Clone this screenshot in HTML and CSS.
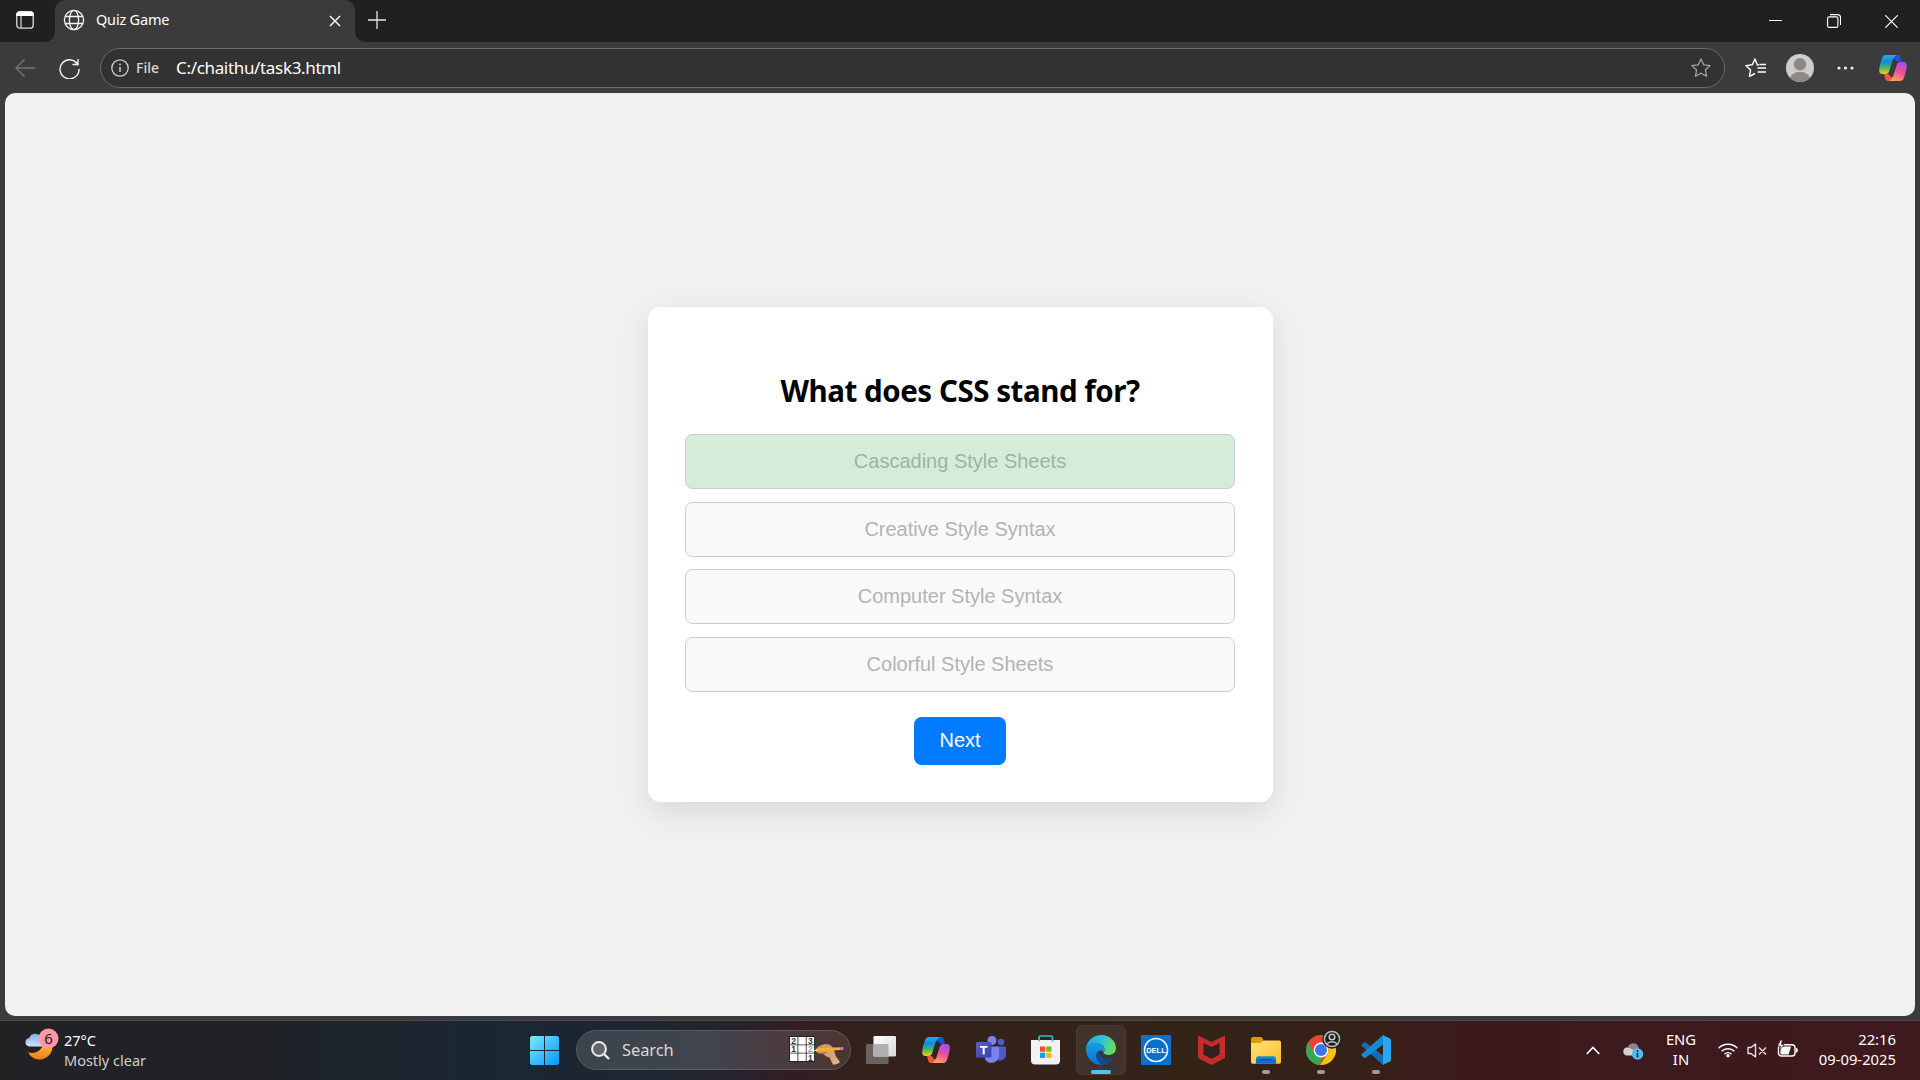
FILE: index.html
```html
<!DOCTYPE html>
<html lang="en">
<head>
<meta charset="utf-8">
<title>Quiz Game</title>
<link rel="stylesheet" href="styles.css">
</head>
<body>
<svg class="defs" width="0" height="0" aria-hidden="true">
  <defs>
    <linearGradient id="cpA" x1="0" y1="0" x2="0" y2="1"><stop offset="0" stop-color="#19b0f4"/><stop offset=".35" stop-color="#1687dd"/><stop offset=".68" stop-color="#4fb85c"/><stop offset="1" stop-color="#f8ce12"/></linearGradient>
    <linearGradient id="cpB" x1=".7" y1="0" x2=".3" y2="1"><stop offset="0" stop-color="#a64cf0"/><stop offset=".5" stop-color="#ee529a"/><stop offset="1" stop-color="#ffa65c"/></linearGradient>
    <linearGradient id="cpC" x1="0" y1="0" x2="1" y2="1"><stop offset="0" stop-color="#1268e5"/><stop offset="1" stop-color="#1747bd"/></linearGradient>
    <symbol id="copilot" viewBox="0 0 28 26">
      <path d="M14 0h5c2 0 2.600 1.500 3.200 3.600L23 7.200h-3c-2 0-2.500-1-3-2.200-.4-1-1.500-1.300-3.300-.3z" fill="url(#cpC)"/>
      <path d="M14 26H9c-2 0-2.600-1.500-3.200-3.600L5 18.800h3c2 0 2.500 1 3 2.200.4 1 1.500 1.300 3.300.3z" fill="#f4573b"/>
      <path d="M7 0h11.500c-2.500.3-4 2.500-4.800 5L10.600 15c-.8 2.700-1.600 4-4.600 4H3.500C.5 19-.2 16.500.3 13.500 1 9 2.200 5.500 3 3.200 3.800 1 5 0 7 0z" fill="url(#cpA)"/>
      <path d="M21 26H9.500c2.500-.3 4-2.500 4.800-5L17.400 11c.8-2.700 1.600-4 4.600-4h2.500c3 0 3.700 2.500 3.200 5.500-.7 4.500-1.900 8-2.700 10.300-.8 2.200-2 3.200-4 3.200z" fill="url(#cpB)"/>
    </symbol>
    <linearGradient id="moon" x1="0" y1="0" x2="0" y2="1"><stop offset="0" stop-color="#ffc63c"/><stop offset="1" stop-color="#f47a1b"/></linearGradient>
    <linearGradient id="cloud" x1="0" y1="0" x2="0" y2="1"><stop offset="0" stop-color="#7faaf0"/><stop offset="1" stop-color="#d3e3fc"/></linearGradient>
    <linearGradient id="win" gradientUnits="userSpaceOnUse" x1="0" y1="0" x2="29" y2="29"><stop offset="0" stop-color="#7ae9ff"/><stop offset="1" stop-color="#0b93fb"/></linearGradient>
    <linearGradient id="tvA" x1="0" y1="0" x2="1" y2="1"><stop offset="0" stop-color="#fff"/><stop offset="1" stop-color="#d8d8d8"/></linearGradient>
    <linearGradient id="teams" x1="0" y1="0" x2="1" y2="1"><stop offset="0" stop-color="#5a62c3"/><stop offset="1" stop-color="#3740ab"/></linearGradient>
    <linearGradient id="edgeA" x1="0" y1=".3" x2="1" y2=".6"><stop offset="0" stop-color="#24a5e0"/><stop offset=".5" stop-color="#30c6cf"/><stop offset="1" stop-color="#6be052"/></linearGradient>
    <linearGradient id="edgeB" x1="0" y1="0" x2="0" y2="1"><stop offset="0" stop-color="#1b9de2"/><stop offset="1" stop-color="#0a70d5"/></linearGradient>
    <linearGradient id="folder" x1="0" y1="0" x2="1" y2="1"><stop offset="0" stop-color="#ffe17b"/><stop offset="1" stop-color="#fcc024"/></linearGradient>
    <linearGradient id="drawer" x1="0" y1="0" x2="0" y2="1"><stop offset="0" stop-color="#1a8de0"/><stop offset="1" stop-color="#0966c4"/></linearGradient>
    <linearGradient id="hand" x1="0" y1="0" x2="1" y2="1"><stop offset="0" stop-color="#c98a60"/><stop offset="1" stop-color="#e3b48f"/></linearGradient>
  </defs>
</svg>

<div class="browser">
  <div class="titlebar">
    <div class="tab-actions">
      <svg width="18" height="18" viewBox="0 0 18 18"><rect x=".8" y="1" width="16.400" height="16.200" rx="3" fill="none" stroke="#ddd" stroke-width="1.300"/><path d="M.2 5V3.500C.2 1.500 1.500.3 3.500.3h11c2 0 3.300 1.200 3.300 3.200V5z" fill="#fff"/><path d="M5 5v12" stroke="#ddd" stroke-width="1.200"/></svg>
    </div>
    <div class="tab">
      <svg width="22" height="22" viewBox="0 0 22 22" fill="none" stroke="#f3f3f3" stroke-width="1.300"><circle cx="11" cy="11" r="9.600"/><ellipse cx="11" cy="11" rx="4.600" ry="9.600"/><path d="M2.300 7.500h17.400M2.300 14.500h17.400"/></svg>
      <span class="tab-title">Quiz Game</span>
      <svg class="tab-close" width="12" height="12" viewBox="0 0 12 12" stroke="#f3f3f3" stroke-width="1.500"><path d="M1 1l10 10M11 1L1 11"/></svg>
    </div>
    <svg class="new-tab" width="18" height="18" viewBox="0 0 18 18" stroke="#e6e6e6" stroke-width="1.300"><path d="M9 0v18M0 9h18"/></svg>
    <div class="window-controls">
      <svg width="13" height="13" viewBox="0 0 13 13" stroke="#fff"><path d="M0 5.500h13"/></svg>
      <svg width="14" height="14" viewBox="0 0 14 14" fill="none" stroke="#fff" stroke-width="1.100"><rect x=".6" y="2.900" width="10.300" height="10.500" rx="1.500"/><path d="M3 .6h7.500c1.800 0 3 1 3 3V11"/></svg>
      <svg width="13" height="13" viewBox="0 0 13 13" stroke="#fff" stroke-width="1.200"><path d="M.3.3l12.400 12.400M12.700.3L.3 12.700"/></svg>
    </div>
  </div>

  <div class="toolbar">
    <svg class="back" width="20" height="18" viewBox="0 0 20 18" fill="none" stroke="#777" stroke-width="1.300"><path d="M20 9H1M9.500.5L1 9l8.500 8.500"/></svg>
    <svg class="reload" width="21" height="21" viewBox="0 0 21 21" fill="none" stroke="#f3f3f3" stroke-width="1.400"><path d="M19.200 7.500A9.500 9.500 0 1 0 20 11M19 1v5.500h-5.500"/></svg>
    <div class="address">
      <svg width="18" height="18" viewBox="0 0 18 18" fill="none" stroke="#d0d0d0" stroke-width="1.300"><circle cx="9" cy="9" r="8.200"/><path d="M9 8v5" stroke-width="1.500"/><circle cx="9" cy="5.400" r=".9" fill="#d0d0d0" stroke="none"/></svg>
      <span class="scheme">File</span>
      <span class="url">C:/chaithu/task3.html</span>
      <svg class="star" width="20" height="20" viewBox="0 0 20 20" fill="none" stroke="#a5a5a5" stroke-width="1.300" stroke-linejoin="round"><path d="M10 1l2.700 5.800 6.400.8-4.700 4.400 1.200 6.300L10 15.200l-5.600 3.100L5.600 12 .9 7.600l6.400-.8z"/></svg>
    </div>
    <div class="tools">
      <svg width="21" height="20" viewBox="0 0 21 20" fill="none" stroke="#fff" stroke-width="1.400" stroke-linejoin="round"><path d="M14 7l-1.700-.3L10 1 7.300 6.800l-6.400.8 4.700 4.400-1.200 6.300L10 15.500M12.500 10H21M12.500 14H21M14.500 6.500H21"/></svg>
      <svg class="avatar" width="28" height="28" viewBox="0 0 28 28"><clipPath id="av"><circle cx="14" cy="14" r="14"/></clipPath><g clip-path="url(#av)"><path fill="#cfcdcb" d="M0 0h28v28H0z"/><circle cx="14" cy="10.300" r="6.200" fill="#8c8885"/><ellipse cx="14" cy="26" rx="10.500" ry="8.300" fill="#8c8885"/></g></svg>
      <svg class="more" width="17" height="4" viewBox="0 0 17 4" fill="#f0f0f0"><circle cx="2" cy="2" r="1.600"/><circle cx="8.500" cy="2" r="1.600"/><circle cx="15" cy="2" r="1.600"/></svg>
      <svg class="assistant" width="28" height="26"><use href="#copilot"/></svg>
    </div>
  </div>

  <main class="page">
    <section class="quiz">
      <h2 class="question">What does CSS stand for?</h2>
      <div class="options">
        <button class="option correct" disabled>Cascading Style Sheets</button>
        <button class="option" disabled>Creative Style Syntax</button>
        <button class="option" disabled>Computer Style Syntax</button>
        <button class="option" disabled>Colorful Style Sheets</button>
      </div>
      <button class="next">Next</button>
    </section>
  </main>
</div>

<footer class="taskbar">
  <div class="weather">
    <svg width="36" height="36" viewBox="0 0 36 36"><path d="M27.500 17.500A13 13 0 0 1 3 24.500c9 2 15-3 15.500-11z" fill="url(#moon)"/><path d="M4 18.500a4.300 4.300 0 0 1 .3-8.500 6 6 0 0 1 11-1l4 9.500z" fill="url(#cloud)"/><circle cx="23.500" cy="10.500" r="10" fill="#ff99a4"/><text x="23.500" y="16" class="badge">6</text></svg>
    <div class="weather-text"><span class="temp">27°C</span><span class="sky">Mostly clear</span></div>
  </div>

  <div class="apps">
    <div class="app">
      <svg width="29" height="29" viewBox="0 0 29 29" fill="url(#win)"><path d="M1.500 0H14v14H0V1.500zM15 0h12.500L29 1.500V14H15zM0 15h14v14H1.500L0 27.500zM15 15h14v12.500L27.500 29H15z"/></svg>
    </div>
    <div class="search">
      <svg width="19" height="19" viewBox="0 0 19 19" fill="none" stroke="#ececec" stroke-width="2"><circle cx="8" cy="8" r="6.900" fill="#62666c"/><path d="M13 13l5 5" stroke-width="2.400"/></svg>
      <span class="search-label">Search</span>
      <svg class="sudoku" width="57" height="30" viewBox="0 0 57 30">
        <path d="M1 1h26v26H1z" fill="#222"/>
        <path d="M2 2h7.500v7.500H2zM10.300 2h7.500v7.500h-7.500zM18.600 2h7.500v7.500h-7.500zM2 10.300h7.500v7.500H2zM10.300 10.300h7.500v7.500h-7.500zM18.600 10.300h7.500v7.500h-7.500zM2 18.600h7.500v7.500H2zM10.300 18.600h7.500v7.500h-7.500zM18.600 18.600h7.500v7.500h-7.500z" fill="#fff"/>
        <g class="digits"><text x="5.700" y="8.800">2</text><text x="22.300" y="8.800">3</text><text x="5.700" y="17.200">1</text><text x="22.300" y="17.200" fill="#999">2</text><text x="22.300" y="25.500">1</text></g>
        <path d="M28 14c1.500-2.500 5-4.500 9-5 3.500-.3 7 1.500 8.700 5 1.300 3 1.300 5.500 2.300 7.500l4 5.500c-2 1.800-4 2.600-7 2.800l-3.500-7.300c-2.500-.3-4.500-2-6-3.500-3-.3-6.500-.7-7.500-2.500z" fill="url(#hand)"/>
        <path d="M33 18.500c2 0 3.500-.5 5-1.500" fill="none" stroke="#9c6540"/>
        <path d="M25.500 15.700l6-2.700 21-.8v2.700l-21 1.400z" fill="#f3b22c"/><path d="M52.500 12.200l2.800-.2v2.700l-2.800.2z" fill="#ee7593"/><path d="M25.500 15.700l3.500-1.600.5 2z" fill="#f7dca8"/>
      </svg>
    </div>
    <div class="app">
      <svg width="30" height="28" viewBox="0 0 30 28"><rect y="8" width="22.500" height="20" rx="1.200" fill="#666361"/><rect x="7.500" width="22.500" height="20.500" rx="1.200" fill="url(#tvA)"/><path d="M7.500 8h15v12.500h-14a1 1 0 0 1-1-1z" fill="#b2b0ae"/></svg>
    </div>
    <div class="app">
      <svg width="28" height="26"><use href="#copilot"/></svg>
    </div>
    <div class="app">
      <svg width="30" height="28" viewBox="0 0 30 28"><circle cx="25" cy="6" r="3.300" fill="#5059c9"/><path d="M20 10.500h8.500c1 0 1.500.6 1.500 1.500v6a6 6 0 0 1-10 5z" fill="#5059c9"/><circle cx="16" cy="4.500" r="4.500" fill="#7b83eb"/><path d="M9 10.500h12.500c1 0 1.500.6 1.500 1.500v8a7.500 7.500 0 0 1-14 3z" fill="#7b83eb"/><rect y="6" width="15.500" height="15.500" rx="1.500" fill="url(#teams)"/><path d="M4 10h7.500v1.800H8.700v6.700h-2v-6.700H4z" fill="#fff"/></svg>
    </div>
    <div class="app store">
      <svg width="29" height="30" viewBox="0 0 29 30"><path d="M8 6V2.500c0-1 .7-1.500 1.500-1.500h10.500c.8 0 1.500.5 1.500 1.500V6" fill="none" stroke="#35b8e8" stroke-width="1.700"/><path d="M0 5h29v20.500c0 2.500-1.500 4-4 4H4c-2.500 0-4-1.500-4-4z" fill="#f2f2f2"/><path d="M9 11.500h5.200v5.200H9z" fill="#f25022"/><path d="M15.200 11.500h5.200v5.200h-5.200z" fill="#7fba00"/><path d="M9 17.700h5.200v5.200H9z" fill="#00a4ef"/><path d="M15.200 17.700h5.200v5.200h-5.200z" fill="#ffb900"/><path d="M7.200 5h1.600v1.500H7.200zM20.700 5h1.600v1.500h-1.600z" fill="#35b8e8"/></svg>
    </div>
    <div class="app active">
      <svg width="30" height="30" viewBox="0 0 30 30"><path d="M0 14C1 5 7.500 0 15 0c8.500 0 15 6 15 13 0 4.500-3.500 7-7.500 7-3 0-5-1-5-2.200 0-.8 1-1.400 1-3.300C18.500 11 15 8 10 8 5 8 1.500 11 0 14z" fill="url(#edgeA)"/><path d="M0 14c1-4 4.500-6.500 9-6.500 5.500 0 9.500 3.500 9.500 7 0 1.900-1 2.500-1 3.300-.8-2.300-3-3-4.500-1.500-2.500 2.500-2 10 4.500 13.400C8 31 0 24 0 14z" fill="url(#edgeB)"/><path d="M13.500 15.200C8.500 18 8 26.500 17.500 29.800c5-.8 8.500-3.300 10.600-7.200-6.600 3.400-15.100.4-14.600-7.400z" fill="#114b8d"/></svg>
    </div>
    <div class="app">
      <svg width="30" height="30" viewBox="0 0 30 30"><path d="M0 0h30v30H0z" fill="#0672ce"/><circle cx="15" cy="15" r="11.500" fill="none" stroke="#fff" stroke-width="1.500"/><text x="15" y="17.800" class="dell">DELL</text></svg>
    </div>
    <div class="app">
      <svg width="27" height="30" viewBox="0 0 27 30"><path d="M0 .5l13.500 6.500L27 .5V23l-13.500 7L0 23z" fill="#c52d2d"/><path d="M5.500 8l8 4 8-4v11.800l-8 4-8-4z" fill="#33221c"/></svg>
    </div>
    <div class="app running">
      <svg width="30" height="27" viewBox="0 0 30 27"><path d="M0 2c0-1.200.8-2 2-2h7c1.500 0 2 .5 3 1.800h0V8H0z" fill="#dc9c08"/><path d="M0 6h9.500l3-2.500H28c1.200 0 2 .8 2 2V25c0 1-.8 1.800-2 1.800H2C.8 26.800 0 26 0 25z" fill="url(#folder)"/><path d="M5 26.800v-5c0-1.500 1-2.600 2.600-2.600h14.800c1.600 0 2.600 1.100 2.600 2.600v5z" fill="url(#drawer)"/><path d="M8.500 22.800h13" stroke="#0b4e96" stroke-width="1.200"/></svg>
    </div>
    <div class="app running">
      <svg width="40" height="40" viewBox="0 0 40 40"><circle cx="20" cy="20" r="15" fill="#ea4335"/><path d="M7 12.500L13.500 23.800A7.500 7.500 0 0 0 20 27.500l-3.500 7.200A15 15 0 0 1 7 12.500z" fill="#34a853"/><path d="M20 35l-.8-.1 7.300-11.100a7.500 7.500 0 0 0 0-7.500L33 12.500A15 15 0 0 1 20 35z" fill="#fbc116"/><path d="M13 23l7 4.500 2.500-.5-4.200 8-3.300-.8z" fill="#34a853"/><circle cx="20" cy="20" r="7.400" fill="#fff"/><circle cx="20" cy="20" r="6" fill="#3b78e7"/><circle cx="31" cy="9" r="9.700" fill="#201f1f"/><circle cx="31" cy="9" r="7.600" fill="none" stroke="#b9b9b9" stroke-width="1.500"/><circle cx="31" cy="7" r="2.800" fill="none" stroke="#c4c4c4" stroke-width="1.500"/><path d="M25.700 14c2.500-3 8-3 10.600 0" fill="none" stroke="#c4c4c4" stroke-width="1.700"/></svg>
    </div>
    <div class="app running">
      <svg width="30" height="30" viewBox="0 0 30 30"><path d="M1 9l2-1.800c.5-.4 1-.4 1.600 0L24 22l-2 8L.6 10.700C0 10.200.2 9.700 1 9z" fill="#0a6fb5"/><path d="M1 21l2 1.800c.5.4 1 .4 1.600 0L24 8l-2-8L.6 19.300c-.6.5-.4 1 .4 1.700z" fill="#168bd0"/><path d="M21.500 0L28.500 3.200c1 .5 1.500 1.100 1.500 2.300v19c0 1.200-.5 1.800-1.500 2.300L21.500 30c.4-.5.500-1 .5-2V2c0-1-.1-1.500-.5-2z" fill="#2aa7f0"/></svg>
    </div>
  </div>

  <div class="tray">
    <svg class="chevron" width="14" height="9" viewBox="0 0 14 9" fill="none" stroke="#fff" stroke-width="1.600"><path d="M.7 8L7 1.500 13.300 8"/></svg>
    <svg class="onedrive" width="21" height="18" viewBox="0 0 21 18"><path d="M5 5a5.500 5.500 0 0 1 10.300-.5L17 10H7z" fill="#8e8484"/><path d="M3.500 13.500A4 4 0 0 1 4 5.600c1.500-.3 3 .2 4.500 1.400L13 9.500l-3 4z" fill="#d7d2d2"/><circle cx="14.500" cy="12" r="5.700" fill="#55bdf5"/><path d="M14.500 11v4.500M14.500 8.300v1.700" stroke="#14242f" stroke-width="1.600"/></svg>
    <div class="lang"><span>ENG</span><span>IN</span></div>
    <svg class="wifi" width="20" height="16" viewBox="0 0 20 16" fill="none" stroke="#fff" stroke-width="1.500"><path d="M.6 6.300a13.200 13.200 0 0 1 18.800 0M3.600 9.300a9 9 0 0 1 12.800 0M6.500 12.200a5 5 0 0 1 7 0"/><circle cx="10" cy="13.800" r="1.700" fill="#fff" stroke="none"/></svg>
    <svg class="volume" width="20" height="15" viewBox="0 0 20 15" fill="none" stroke="#e8e0e0" stroke-width="1.400" stroke-linejoin="round"><path d="M1 4.500h3L8.500 1v13L4 10.500H1zM12 4.500l7 7M19 4.500l-7 7"/></svg>
    <svg class="battery" width="21" height="17" viewBox="0 0 21 17"><rect x="1.500" y="4.700" width="16.500" height="11.300" rx="3" fill="none" stroke="#fff" stroke-width="1.400"/><path d="M3.500 7L8 6.500h6L11.500 14.500H4.500c-.7 0-1-.5-1-1z" fill="#fff"/><path d="M18.800 8c1.300 0 2 .7 2 2.300s-.7 2.400-2 2.400z" fill="#fff"/><path d="M3.500 0L.5 6h3L2.500 10.500 7 4.500H4.300L5.500 0z" fill="#fff" stroke="#3e191e" stroke-width=".7"/></svg>
    <div class="clock"><span>22:16</span><span>09-09-2025</span></div>
  </div>
</footer>
</body>
</html>
```
FILE: styles.css
```css
* { box-sizing: border-box; }

body {
  margin: 0;
  width: 1920px;
  height: 1080px;
  overflow: hidden;
  display: flex;
  flex-direction: column;
  font-family: "Noto Sans", "Open Sans", sans-serif;
  color: #fff;
}

svg { display: block; flex: none; }
.defs { position: absolute; }

/* Browser window */
.browser {
  height: 1021px;
  display: flex;
  flex-direction: column;
  background: #3b3b3b;
  border-bottom: 1px solid #4a4a4a;
}

.titlebar {
  height: 42px;
  flex: none;
  display: flex;
  align-items: center;
  background: linear-gradient(#202020 0 20px, #3b3b3b 20px);
}

.tab-actions {
  width: 55px;
  height: 42px;
  padding: 11px 0 0 16px;
  background: #202020;
  border-bottom-right-radius: 10px;
}

.tab {
  width: 300px;
  height: 42px;
  display: flex;
  align-items: center;
  padding: 0 14px 3px 8px;
  background: #3b3b3b;
  border-radius: 10px 10px 0 0;
}

.tab-title {
  margin: 0 0 1px 11px;
  font-size: 14.5px;
  letter-spacing: -0.2px;
}

.tab-close { margin: 2px 0 0 auto; }

.new-tab {
  box-sizing: content-box;
  height: 18px;
  padding: 11px 0 13px 13px;
  background: #202020;
  border-bottom-left-radius: 10px;
}

.window-controls {
  flex: 1;
  height: 42px;
  display: flex;
  justify-content: flex-end;
  align-items: center;
  gap: 44.5px;
  padding-right: 22px;
  background: #202020;
}

.toolbar {
  height: 51px;
  flex: none;
  display: flex;
  align-items: center;
  padding: 1px 13px 0 15px;
}

.reload { margin-left: 24px; }

.address {
  width: 1625px;
  height: 40px;
  margin-left: 20px;
  display: flex;
  align-items: center;
  padding: 0 13px 0 10px;
  background: #323232;
  border: 1px solid #6b6b6b;
  border-radius: 20px;
}

.scheme {
  width: 40px;
  margin: 0 0 1px 7px;
  font-size: 14px;
  font-weight: 500;
  color: #d8d8d8;
}

.url {
  margin-bottom: 1px;
  font-size: 17px;
  letter-spacing: -0.33px;
}

.star { margin-left: auto; }

.tools {
  flex: 1;
  display: flex;
  align-items: center;
  margin-left: 19.5px;
}

.avatar { margin-left: 20px; }
.more { margin-left: 23px; }
.assistant { margin-left: auto; }

.page {
  height: 923px;
  flex: none;
  margin: 0 5px;
  display: flex;
  align-items: center;
  justify-content: center;
  background: #f1f1f1;
  border-radius: 10px;
}

/* Quiz card */
.quiz {
  width: 625px;
  height: 495px;
  display: flex;
  flex-direction: column;
  align-items: center;
  padding: 63px 37.5px 37.5px;
  background: #fff;
  border-radius: 12.5px;
  box-shadow: 0 10px 31px rgba(0, 0, 0, 0.1);
}

.question {
  margin: 0 0 23px;
  height: 41px;
  font-size: 29.5px;
  line-height: 41px;
  font-weight: 700;
  letter-spacing: -0.45px;
  color: #000;
  white-space: nowrap;
}

.options {
  width: 100%;
  display: flex;
  flex-direction: column;
  gap: 12.5px;
}

.option {
  height: 55px;
  padding: 0;
  background: #f9f9f9;
  border: 1px solid #ccc;
  border-radius: 7.5px;
  font: 20px "Liberation Sans", Arial, sans-serif;
  color: #b3b3b3;
}

.option.correct {
  background: #d4edda;
  color: #9eb3a4;
}

.next {
  width: 92px;
  height: 48px;
  margin-top: 25px;
  padding: 0;
  background: #007bff;
  border: 0;
  border-radius: 7.5px;
  font: 20px "Liberation Sans", Arial, sans-serif;
  color: #fff;
}

/* Taskbar */
.taskbar {
  flex: 1;
  display: flex;
  align-items: center;
  padding-bottom: 1px;
  background: linear-gradient(90deg, #222225 0, #202226 250px, #1a2733 470px, #1c2631 600px, #222530 710px, #341d22 800px, #33221c 870px, #332317 1200px, #362018 1370px, #3c1a1c 1460px, #3e191e 1920px);
}

.weather {
  width: 519px;
  display: flex;
  gap: 3px;
  padding: 0 0 3px 25px;
}

.badge {
  font-size: 15px;
  text-anchor: middle;
  fill: #1b1b1b;
}

.weather-text {
  display: flex;
  flex-direction: column;
  padding-top: 2px;
  font-size: 14.5px;
  line-height: 20px;
}

.sky { color: #cfcfcf; }

.apps {
  display: flex;
  align-items: center;
  gap: 5px;
}

.app {
  position: relative;
  width: 50px;
  height: 50px;
  display: flex;
  align-items: center;
  justify-content: center;
}

.app.store { padding-right: 2px; }

.app.active {
  background: #41322b;
  border: 1px solid #4a3c35;
  border-radius: 6px;
}

.app.active::after,
.app.running::after {
  content: "";
  position: absolute;
  left: 50%;
  bottom: 1px;
  width: 8px;
  height: 4px;
  border-radius: 2px;
  background: #a39a96;
  transform: translateX(-50%);
}

.app.active::after {
  bottom: 0;
  width: 20px;
  background: #4cc2ff;
}

.search {
  width: 275px;
  height: 40px;
  margin-left: 2px;
  display: flex;
  align-items: center;
  padding: 0 5px 0 14px;
  background: linear-gradient(90deg, #3b454e, #41444c 50%, #4d3a3e 80%, #493630);
  border: 1px solid #585b61;
  border-radius: 20px;
}

.search-label {
  margin: 0 0 1px 12px;
  font-size: 16.5px;
  letter-spacing: -0.1px;
  color: #d8d8d8;
}

.sudoku { margin-left: auto; }

.digits {
  font: 700 8.5px "Liberation Sans", sans-serif;
  text-anchor: middle;
  fill: #333;
}

.dell {
  font: 700 7.5px "Liberation Sans", sans-serif;
  text-anchor: middle;
  fill: #fff;
}

.tray {
  flex: 1;
  display: flex;
  align-items: center;
  padding-left: 185px;
}

.onedrive { margin: 2px 0 0 23px; }

.lang {
  width: 44px;
  margin-left: 15px;
  text-align: center;
}

.lang,
.clock {
  display: flex;
  flex-direction: column;
  padding-bottom: 2px;
  font-size: 14.8px;
  line-height: 20px;
}

.wifi { margin-left: 15px; }
.volume { margin-left: 9px; }
.battery { margin-left: 10px; margin-bottom: 3px; }

.clock {
  margin-left: auto;
  padding-right: 24px;
  text-align: right;
}
```
